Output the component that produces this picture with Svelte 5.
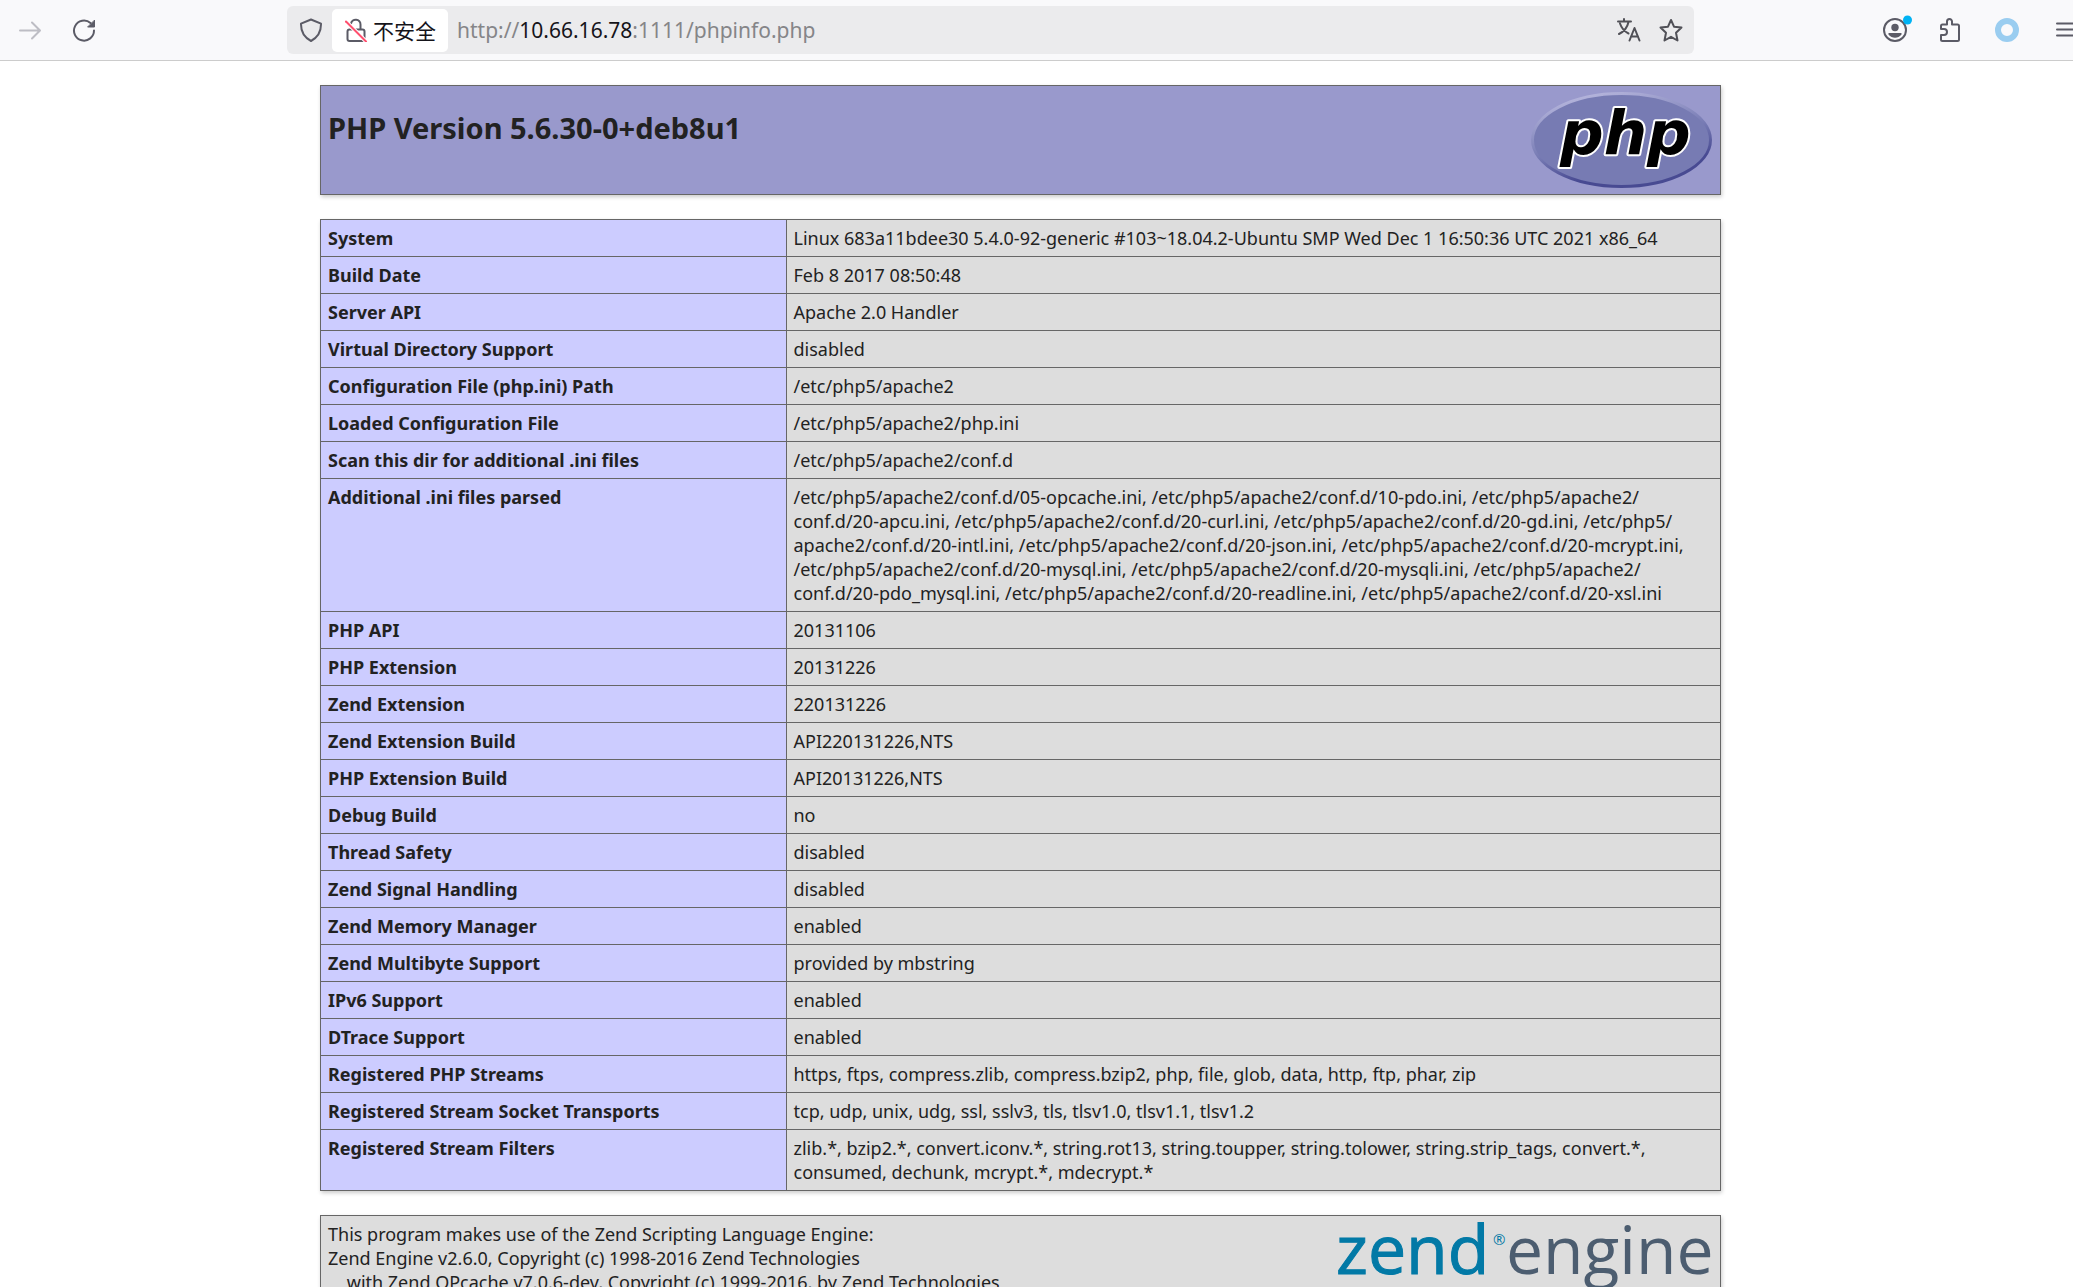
<style>
:global(body) {
	margin: 0;
	background: #fff;
}

.browser {
	display: flex;
	flex-direction: column;
	height: 100vh;
	overflow: hidden;
	color: #222;
	font-family: 'Noto Sans', 'Open Sans', 'Noto Sans CJK SC', sans-serif;
}

button {
	display: block;
	flex: none;
	margin: 0;
	padding: 0;
	border: 0;
	background: none;
	font: inherit;
	color: inherit;
	cursor: pointer;
}

svg {
	display: block;
}

.icon {
	width: 24px;
	height: 24px;
	fill: none;
	stroke: currentColor;
	stroke-width: 2;
	stroke-linecap: round;
	stroke-linejoin: round;
}

.toolbar {
	display: grid;
	grid-template-columns: 287fr 1407fr 379fr;
	align-items: center;
	flex: none;
	height: 60px;
	border-bottom: 1px solid #ccc;
	background: #f9f9fb;
	color: #5b5b66;
}

.nav {
	display: flex;
	gap: 30px;
	padding-left: 18px;
}

.nav button:disabled {
	color: #bdbdc4;
	cursor: default;
}

.urlbar {
	display: flex;
	align-items: center;
	box-sizing: border-box;
	height: 48px;
	padding: 0 11px 0 12px;
	border-radius: 6px;
	background: #ebebed;
	font-size: 21px;
}

.security {
	display: flex;
	align-items: center;
	gap: 5px;
	height: 43px;
	margin: 0 9px;
	padding: 0 12px;
	border-radius: 5px;
	background: #fff;
	color: #15141a;
	font-family: 'Noto Sans CJK SC', sans-serif;
}

.security .icon {
	color: #5b5b66;
}

.address {
	flex: 1;
	outline: 0;
	color: #858588;
	white-space: nowrap;
}

.address strong {
	color: #15141a;
	font-weight: 400;
}

.page-actions {
	display: flex;
	gap: 18px;
	color: #505057;
}

.tools {
	display: flex;
	justify-content: flex-end;
	gap: 32px;
	margin-right: -2px;
}

.page {
	flex: 1;
	min-height: 0;
	overflow: hidden;
	padding: 24px 32px 0 0;
}

.box,
table {
	box-sizing: border-box;
	width: calc(100% - 32px);
	max-width: 1401px;
	margin: 0 auto 24px;
	border: 1px solid #666;
	box-shadow: 1px 2px 4px #ccc;
}

.box {
	display: flex;
	justify-content: space-between;
	align-items: flex-start;
	padding: 6px 7px;
	background: #ddd;
	font-size: 18px;
	line-height: 24px;
}

.heading {
	background: #99c;
}

h1 {
	margin: 18px 0 0;
	font-size: 29px;
	line-height: 36px;
}

table {
	border-collapse: collapse;
	table-layout: fixed;
	font-size: 18px;
	line-height: 24px;
}

th,
td {
	padding: 6px 7px;
	border: 1px solid #666;
	text-align: left;
	vertical-align: top;
}

th {
	width: 33.25%;
	box-sizing: border-box;
	background: #ccf;
	font-weight: 700;
}

td {
	background: #ddd;
	white-space: pre-line;
}

.credits {
	margin: 0;
	white-space: pre-wrap;
}

.php-text {
	font: italic 700 61px 'DejaVu Sans', sans-serif;
	stroke: #fff;
	stroke-width: 4;
	stroke-linejoin: round;
	paint-order: stroke;
}

.zend-text {
	font: 400 68px 'Open Sans', sans-serif;
	fill: #0279a6;
	stroke: #0279a6;
	stroke-width: 1;
}

.engine-text {
	font: 400 66px 'Open Sans', sans-serif;
	fill: #4c5d70;
}

.mark-text {
	font: 400 15px 'Open Sans', sans-serif;
	fill: #0279a6;
}
</style>

<script>
  const rows = [
    ['System', 'Linux 683a11bdee30 5.4.0-92-generic #103~18.04.2-Ubuntu SMP Wed Dec 1 16:50:36 UTC 2021 x86_64'],
    ['Build Date', 'Feb 8 2017 08:50:48'],
    ['Server API', 'Apache 2.0 Handler'],
    ['Virtual Directory Support', 'disabled'],
    ['Configuration File (php.ini) Path', '/etc/php5/apache2'],
    ['Loaded Configuration File', '/etc/php5/apache2/php.ini'],
    ['Scan this dir for additional .ini files', '/etc/php5/apache2/conf.d'],
    ['Additional .ini files parsed', [
      '/etc/php5/apache2/conf.d/05-opcache.ini, /etc/php5/apache2/conf.d/10-pdo.ini, /etc/php5/apache2/',
      'conf.d/20-apcu.ini, /etc/php5/apache2/conf.d/20-curl.ini, /etc/php5/apache2/conf.d/20-gd.ini, /etc/php5/',
      'apache2/conf.d/20-intl.ini, /etc/php5/apache2/conf.d/20-json.ini, /etc/php5/apache2/conf.d/20-mcrypt.ini,',
      '/etc/php5/apache2/conf.d/20-mysql.ini, /etc/php5/apache2/conf.d/20-mysqli.ini, /etc/php5/apache2/',
      'conf.d/20-pdo_mysql.ini, /etc/php5/apache2/conf.d/20-readline.ini, /etc/php5/apache2/conf.d/20-xsl.ini'
    ].join('\n')],
    ['PHP API', '20131106'],
    ['PHP Extension', '20131226'],
    ['Zend Extension', '220131226'],
    ['Zend Extension Build', 'API220131226,NTS'],
    ['PHP Extension Build', 'API20131226,NTS'],
    ['Debug Build', 'no'],
    ['Thread Safety', 'disabled'],
    ['Zend Signal Handling', 'disabled'],
    ['Zend Memory Manager', 'enabled'],
    ['Zend Multibyte Support', 'provided by mbstring'],
    ['IPv6 Support', 'enabled'],
    ['DTrace Support', 'enabled'],
    ['Registered PHP Streams', 'https, ftps, compress.zlib, compress.bzip2, php, file, glob, data, http, ftp, phar, zip'],
    ['Registered Stream Socket Transports', 'tcp, udp, unix, udg, ssl, sslv3, tls, tlsv1.0, tlsv1.1, tlsv1.2'],
    ['Registered Stream Filters', 'zlib.*, bzip2.*, convert.iconv.*, string.rot13, string.toupper, string.tolower, string.strip_tags, convert.*,\nconsumed, dechunk, mcrypt.*, mdecrypt.*']
  ]

  const credits = [
    'This program makes use of the Zend Scripting Language Engine:',
    'Zend Engine v2.6.0, Copyright (c) 1998-2016 Zend Technologies',
    '    with Zend OPcache v7.0.6-dev, Copyright (c) 1999-2016, by Zend Technologies'
  ].join('\n')
</script>

<div class="browser">
  <header class="toolbar">
    <nav class="nav">
      <button disabled aria-label="Forward">
        <svg class="icon" viewBox="0 0 24 24"><path d="M2 12.500H21.500M14 4.500l8 8-8 8" /></svg>
      </button>
      <button aria-label="Reload">
        <svg class="icon" viewBox="0 0 24 24">
          <path d="M22 12.500A10 10 0 1 1 18.500 5" />
          <path d="M22.500 2.500v6.500h-6.500z" fill="currentColor" stroke-width="1" />
        </svg>
      </button>
    </nav>

    <div class="urlbar">
      <button aria-label="Tracking protection">
        <svg class="icon" viewBox="0 0 24 24"><path d="M12 1.500l10 4.200c.2 8.500-3 13.600-10 17.300C5 19.300 1.800 14.200 2 5.700z" /></svg>
      </button>
      <button class="security">
        <svg class="icon" viewBox="0 0 24 24">
          <path d="M7 5.500a4.800 4.800 0 0 1 9.500 1V11" />
          <rect x="3.500" y="11.500" width="17" height="11.500" rx="2" />
          <path d="M2 3.500l20 20" stroke="#fff" stroke-width="4" />
          <path d="M2 3.500l20 20" stroke="#ff4f6e" />
        </svg>
        不安全
      </button>
      <div class="address" role="textbox" tabindex="0" aria-label="Address" contenteditable="true" spellcheck="false">http://<strong>10.66.16.78</strong>:1111/phpinfo.php</div>
      <div class="page-actions">
        <button aria-label="Translate">
          <svg class="icon" viewBox="0 0 24 24">
            <path d="M1 3.500h13M7 1v2.500M11.500 4c-1 5-4.500 9.500-9.500 12M3 5.500c1.500 4.500 4.500 8 8.500 10" />
            <path d="M12.500 22.500l5-12.500 5 12.500M14 18.500h7" />
          </svg>
        </button>
        <button aria-label="Bookmark this page">
          <svg class="icon" viewBox="0 0 24 24"><path d="M12 2l3 6.700 7.500.8-5.500 5.200 1.500 7.800-6.500-3.700-6.500 3.700 1.500-7.800L1.500 9.500 9 8.700z" /></svg>
        </button>
      </div>
    </div>

    <div class="tools">
      <button aria-label="Account">
        <svg class="icon" viewBox="0 0 24 24" overflow="visible">
          <circle cx="12" cy="12" r="11" />
          <circle cx="12" cy="9.500" r="3.700" fill="currentColor" stroke="none" />
          <path d="M6 15h12c.8 0 .8 1 .3 1.700-3 4-9.600 4-12.600 0C5.200 16 5.200 15 6 15z" fill="currentColor" stroke="none" />
          <circle cx="24.500" cy="2" r="4.500" fill="#00b3f4" stroke="none" />
        </svg>
      </button>
      <button aria-label="Extensions">
        <svg class="icon" viewBox="0 0 24 24">
          <path d="M2 10.500V8a1.500 1.500 0 0 1 1.500-1.500H8V3.500a2.500 2.500 0 0 1 5 0v3h5.500A1.500 1.500 0 0 1 20 8v13.500a1.500 1.500 0 0 1-1.500 1.500h-15A1.500 1.500 0 0 1 2 21.500V17h3a3 3 0 0 0 0-6H2z" />
        </svg>
      </button>
      <button aria-label="Extension">
        <svg class="icon" viewBox="0 0 24 24"><circle cx="12" cy="12" r="9" stroke="#9acdf0" stroke-width="6" /></svg>
      </button>
      <button aria-label="Menu">
        <svg class="icon" viewBox="0 0 24 24"><path d="M6 5.500h20M6 11.500h20M6 17.500h20" /></svg>
      </button>
    </div>
  </header>

  <main class="page">
    <div class="box heading">
      <h1>PHP Version 5.6.30-0+deb8u1</h1>
      <svg width="182" height="96" viewBox="0 0 182 96" role="img" aria-label="PHP logo">
        <defs>
          <linearGradient id="rim" x1="0.3" y1="0" x2="0.7" y2="1">
            <stop offset="0" stop-color="#b5b5dc" />
            <stop offset="0.5" stop-color="#777bb4" />
            <stop offset="0.8" stop-color="#484a92" />
          </linearGradient>
        </defs>
        <ellipse cx="90.500" cy="48" rx="89" ry="46.500" fill="#777bb3" stroke="url(#rim)" stroke-width="3" />
        <text class="php-text" x="29" y="62">php</text>
      </svg>
    </div>

    <table>
      <tbody>
        {#each rows as [name, value]}
          <tr>
            <th scope="row">{name}</th>
            <td>{value}</td>
          </tr>
        {/each}
      </tbody>
    </table>

    <div class="box">
      <p class="credits">{credits}</p>
      <svg width="376" height="72" viewBox="0 0 376 72" role="img" aria-label="Zend Engine logo">
        <text class="zend-text" x="-1" y="52">zend</text>
        <text class="mark-text" x="156" y="23">®</text>
        <text class="engine-text" x="169" y="52">engine</text>
      </svg>
    </div>
  </main>
</div>
